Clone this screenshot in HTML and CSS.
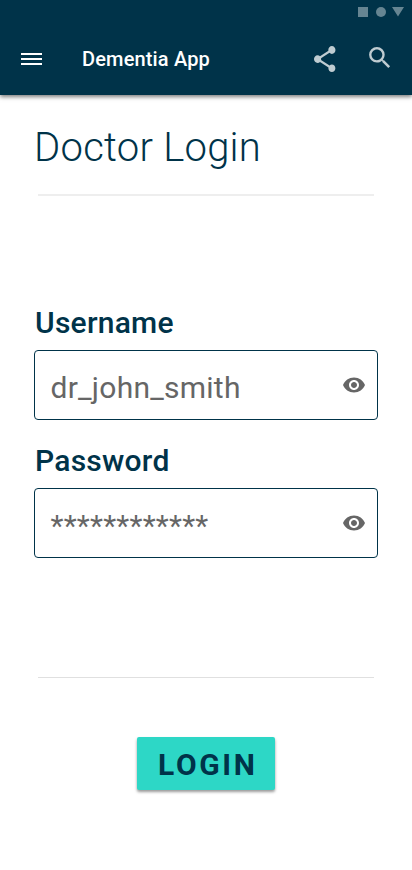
FILE: index.html
```
<!DOCTYPE html>
<html lang="en">
<head>
<meta charset="utf-8">
<title>Dementia App</title>
<link rel="stylesheet" href="styles.css">
</head>
<body>
<header class="app-header">
  <div class="status-bar">
    <svg width="46" height="10" viewBox="0 0 46 10"><path d="M0 0h10v10H0zM34 0h12l-6 9.500z"/><circle cx="23" cy="5" r="5"/></svg>
  </div>
  <div class="toolbar">
    <div class="menu"><span></span><span></span><span></span></div>
    <div class="app-title">Dementia App</div>
    <svg class="share" viewBox="0 0 30 32"><path transform="translate(.4 .4) scale(1.194 1.31)" d="M18 16.080c-.760 0-1.440.300-1.960.770L8.910 12.700c.050-.230.090-.460.090-.700s-.040-.470-.090-.700l7.050-4.110c.540.500 1.250.810 2.040.810 1.660 0 3-1.340 3-3s-1.340-3-3-3-3 1.340-3 3c0 .240.040.470.090.700L8.040 9.810C7.500 9.310 6.790 9 6 9c-1.660 0-3 1.340-3 3s1.340 3 3 3c.790 0 1.500-.310 2.040-.810l7.120 4.160c-.050.210-.080.430-.080.650 0 1.610 1.310 2.920 2.920 2.920s2.920-1.310 2.920-2.920-1.310-2.920-2.920-2.920z"/></svg>
    <svg class="search" viewBox="0 0 30 30"><path transform="translate(.5 .4) scale(1.2)" d="M15.500 14h-.790l-.280-.270A6.471 6.471 0 0 0 16 9.500 6.500 6.500 0 1 0 9.500 16c1.610 0 3.090-.590 4.230-1.570l.270.280v.790l5 4.990L20.490 19l-4.990-5zm-6 0C7.010 14 5 11.990 5 9.500S7.010 5 9.500 5 14 7.010 14 9.500 11.990 14 9.500 14z"/></svg>
  </div>
</header>
<main class="content">
  <h1>Doctor Login</h1>
  <div class="rule rule-top"></div>
  <div class="fields">
    <div class="label">Username</div>
    <div class="field">
      <span class="value username">dr_john_smith</span>
      <svg class="eye" viewBox="0 0 24 24"><path d="M12 4.500C7 4.500 2.730 7.610 1 12c1.730 4.390 6 7.500 11 7.500s9.270-3.110 11-7.500c-1.730-4.390-6-7.500-11-7.500zM12 17c-2.760 0-5-2.240-5-5s2.240-5 5-5 5 2.240 5 5-2.240 5-5 5zm0-8c-1.660 0-3 1.340-3 3s1.340 3 3 3 3-1.340 3-3-1.340-3-3-3z"/></svg>
    </div>
    <div class="label">Password</div>
    <div class="field">
      <span class="value password">************</span>
      <svg class="eye" viewBox="0 0 24 24"><path d="M12 4.500C7 4.500 2.730 7.610 1 12c1.730 4.390 6 7.500 11 7.500s9.270-3.110 11-7.500c-1.730-4.390-6-7.500-11-7.500zM12 17c-2.760 0-5-2.240-5-5s2.240-5 5-5 5 2.240 5 5-2.240 5-5 5zm0-8c-1.660 0-3 1.340-3 3s1.340 3 3 3 3-1.340 3-3-1.340-3-3-3z"/></svg>
    </div>
  </div>
  <div class="rule rule-bottom"></div>
  <button class="login" type="button">LOGIN</button>
</main>
</body>
</html>
```
FILE: styles.css
```
* { box-sizing: border-box; }
body {
  margin: 0;
  height: 870px;
  overflow: hidden;
  background: #fff;
  color: #003349;
  font-family: Roboto, sans-serif;
}
svg { display: block; flex: none; }
.app-header {
  height: 95px;
  background: #003349;
  box-shadow: 0 2px 4px rgba(0, 0, 0, .5);
}
.status-bar {
  height: 24px;
  padding: 7px 8px 0 0;
  display: flex;
  justify-content: flex-end;
  fill: #668592;
}
.toolbar {
  height: 71px;
  padding-left: 21px;
  display: flex;
  align-items: flex-start;
}
.menu {
  width: 21px;
  margin-top: 29px;
  display: grid;
  gap: 3px;
}
.menu span { height: 2px; background: #fff; }
.app-title {
  width: 228px;
  margin: 23px 0 0 40px;
  color: #fff;
  font-size: 20px;
  font-weight: 500;
  line-height: 24px;
  letter-spacing: .15px;
}
.share { width: 30px; height: 32px; margin-top: 19px; fill: #bfccd1; }
.search { width: 30px; height: 30px; margin: 19px 0 0 25px; fill: #bfccd1; }
.content {
  display: flex;
  flex-direction: column;
  padding: 0 34px;
}
h1 {
  margin: 29px 0 0;
  font-size: 40px;
  font-weight: 300;
  line-height: 48px;
  letter-spacing: .25px;
}
.rule { width: 336px; margin-left: 4px; }
.rule-top { height: 2px; margin-top: 22px; background: #eee; }
.fields { margin-top: 108px; }
.label {
  height: 46px;
  padding: 1px 0 0 1px;
  font-size: 30px;
  font-weight: 500;
  line-height: 36px;
  letter-spacing: .25px;
}
.field {
  height: 70px;
  margin-bottom: 22px;
  padding: 0 11px 0 15.500px;
  display: flex;
  align-items: center;
  justify-content: space-between;
  border: 1px solid #003349;
  border-radius: 4px;
}
.value {
  padding-top: 5px;
  color: #666;
  font-size: 30px;
  line-height: 36px;
  letter-spacing: .25px;
}
.eye { width: 24px; height: 24px; fill: #666; }
.rule-bottom { height: 1px; margin-top: 97px; background: #e0e0e0; }
.login {
  width: 138px;
  height: 53px;
  margin: 59px 0 0 103px;
  padding: 2px 0 0 3.500px;
  border: 0;
  border-radius: 2px;
  background: #2dd7c6;
  box-shadow: 0 2px 3px rgba(0, 0, 0, .4);
  color: #003349;
  font: 700 30px/36px Roboto, sans-serif;
  letter-spacing: 2.600px;
}
```
